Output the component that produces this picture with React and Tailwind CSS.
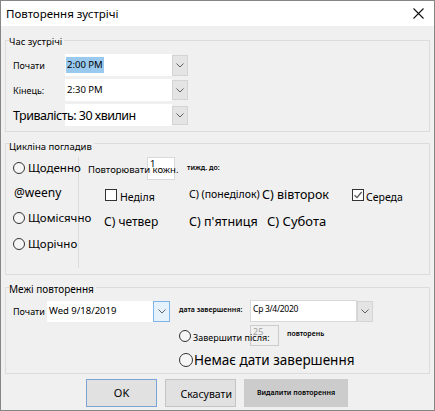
import React from "react";

const F = { fontFamily: '"Noto Sans", "Open Sans", sans-serif' };

function Radio({ size = 12 }) {
  return (
    <span
      className="inline-block shrink-0 rounded-full border border-[#333333] bg-[#f6f6f6]"
      style={{ width: size, height: size }}
    />
  );
}

function Check({ checked }) {
  return (
    <span className="relative inline-block w-[12px] h-[12px] shrink-0 border border-[#333333] bg-white">
      {checked && (
        <svg className="absolute left-[0px] top-[0px]" width="10" height="10" viewBox="0 0 10 10">
          <path d="M1.5 5.2 L4 7.6 L8.6 2" fill="none" stroke="#555" strokeWidth="1.3" />
        </svg>
      )}
    </span>
  );
}

function DropBtn({ cls = "" }) {
  return (
    <div className={"flex items-center justify-center shrink-0 " + cls}>
      <svg width="8" height="5" viewBox="0 0 8 5">
        <path d="M0.5 0.5 L4 4 L7.5 0.5" fill="none" stroke="#606060" strokeWidth="1" />
      </svg>
    </div>
  );
}

export default function App() {
  return (
    <div
      className="w-[435px] h-[411px] bg-[#f0f0f0] border border-[#868686] flex flex-col overflow-hidden text-black"
      style={F}
    >
      {/* title bar */}
      <div className="h-[25px] bg-white flex items-center justify-between pl-[5px] pr-[10px] shrink-0">
        <span className="text-[11.5px] leading-[14px]">Повторення зустрічі</span>
        <svg width="11" height="11" viewBox="0 0 11 11">
          <path d="M0.5 0.5 L10.5 10.5 M10.5 0.5 L0.5 10.5" stroke="#111" strokeWidth="1.1" />
        </svg>
      </div>

      <div className="flex flex-col px-[4px]">
        {/* group 1 */}
        <div className="relative mt-[14px] h-[92px] border border-[#dcdcdc]">
          <span className="absolute left-[3px] top-[-6px] bg-[#f0f0f0] pr-[2px] text-[9.5px] leading-[14px]">
            Час зустрічі
          </span>
          <div className="flex flex-col pt-[13px] pl-[7px]">
            <div className="flex items-center h-[22px]">
              <span className="w-[52px] text-[9px] pt-[2px]">Почати</span>
              <div className="w-[107px] h-[22px] bg-white flex items-center pl-[1px]">
                <span className="bg-[#99c9ef] text-[9.5px] leading-[16px] px-[1px]">2:00 PM</span>
              </div>
              <DropBtn cls="w-[16px] h-[21px] bg-[#e4e4e4] border border-[#d4d4d4]" />
            </div>
            <div className="flex items-center h-[22px] mt-[3px]">
              <span className="w-[52px] text-[9px] pt-[2px]">Кінець:</span>
              <div className="w-[107px] h-[22px] bg-white flex items-center pl-[2px]">
                <span className="text-[9.5px]">2:30 PM</span>
              </div>
              <DropBtn cls="w-[16px] h-[20px] bg-[#e4e4e4] border border-[#d4d4d4]" />
            </div>
            <div className="flex items-center h-[22px] mt-[3px]">
              <span className="relative z-10 w-[52px] whitespace-nowrap text-[12.5px] tracking-[-0.5px] leading-[18px] pt-[2px]">
                Тривалість: 30 хвилин
              </span>
              <div className="w-[107px] h-[22px] bg-white" />
              <DropBtn cls="w-[16px] h-[19px] bg-[#e4e4e4] border border-[#d4d4d4]" />
            </div>
          </div>
        </div>

        {/* group 2 */}
        <div className="relative mt-[11px] h-[132px] border border-[#dcdcdc]">
          <span className="absolute left-[3px] top-[-4px] bg-[#f0f0f0] pr-[2px] text-[9.5px] leading-[14px]">
            Цикліна погладив
          </span>
          <div className="flex pt-[13px]">
            <div className="w-[73px] h-[111px] border-r border-[#dcdcdc] pl-[7px] flex flex-col shrink-0">
              <div className="flex items-center h-[22px] gap-[3px] whitespace-nowrap">
                <Radio />
                <span className="text-[11.5px]">Щоденно</span>
              </div>
              <div className="flex items-center h-[22px] mt-[3px] pl-[1px] whitespace-nowrap">
                <span className="text-[12px]">@weeny</span>
              </div>
              <div className="flex items-center h-[22px] mt-[3px] gap-[3px] whitespace-nowrap">
                <Radio />
                <span className="text-[11.5px]">Щомісячно</span>
              </div>
              <div className="flex items-center h-[22px] mt-[4px] gap-[3px] whitespace-nowrap">
                <Radio />
                <span className="text-[11.5px]">Щорічно</span>
              </div>
            </div>

            <div className="flex flex-col">
              <div className="flex items-center h-[23px] pl-[9px]">
                <span className="relative z-10 w-[59px] whitespace-nowrap text-[9.5px] pt-[3px]">
                  Повторювати кожн.
                </span>
                <div className="w-[28px] h-[23px] bg-white border border-[#dadada] text-[9.5px] leading-[12px] pl-[2px]">
                  1
                </div>
                <span className="ml-[12px] text-[7px] font-semibold">тижд. до:</span>
              </div>

              <div className="flex items-center h-[20px] mt-[5px] pl-[26px] whitespace-nowrap">
                <div className="w-[84px] flex items-center gap-[3px]">
                  <Check />
                  <span className="text-[10.5px] pt-[6px]">Неділя</span>
                </div>
                <span className="w-[73px] text-[10.5px] pb-[1px]">С) (понеділок)</span>
                <span className="w-[90px] text-[12.5px] pt-[1px]">С) вівторок</span>
                <div className="flex items-center gap-[2px]">
                  <Check checked />
                  <span className="text-[10.5px] pt-[6px]">Середа</span>
                </div>
              </div>

              <div className="flex items-center h-[20px] mt-[7px] pl-[25px] whitespace-nowrap">
                <span className="w-[85px] text-[12px]">С) четвер</span>
                <span className="w-[78px] text-[12.5px]">С) п'ятниця</span>
                <span className="text-[13px]">С) Субота</span>
              </div>
            </div>
          </div>
        </div>

        {/* group 3 */}
        <div className="relative mt-[12px] h-[87px] border border-[#dcdcdc]">
          <span className="absolute left-[3px] top-[-6px] bg-[#f0f0f0] pr-[2px] text-[10px] leading-[14px]">
            Межі повторення
          </span>
          <div className="flex items-start">
            <div className="flex items-center mt-[13px] pl-[7px]">
              <span className="w-[34px] text-[9px]">Почати</span>
              <div className="w-[106px] h-[21px] bg-white flex items-center pl-[2px]">
                <span className="text-[9.5px] pb-[1px]">Wed 9/18/2019</span>
              </div>
              <DropBtn cls="w-[17px] h-[21px] bg-[#e5f1fb] border border-[#7eb4ea]" />
            </div>

            <div className="flex flex-col ml-[9px] mt-[12px]">
              <div className="flex items-center h-[22px]">
                <span className="w-[71px] text-[7px] font-semibold whitespace-nowrap pb-[2px]">дата завершення:</span>
                <div className="w-[107px] h-[22px] bg-white border border-[#d9d9d9] flex items-center pl-[2px]">
                  <span className="text-[8.5px] tracking-[-0.3px] pb-[3px]">Ср 3/4/2020</span>
                </div>
                <DropBtn cls="w-[16px] h-[21px] bg-[#e4e4e4] border border-[#d4d4d4]" />
              </div>
              <div className="flex items-center h-[21px] mt-[3px]">
                <div className="relative z-10 w-[71px] flex items-center gap-[2px] whitespace-nowrap">
                  <Radio />
                  <span className="text-[9px] pt-[4px]">Завершити після:</span>
                </div>
                <div className="w-[29px] h-[21px] bg-[#f0f0f0] border border-[#cccccc] text-[9px] leading-[12px] text-[#a0a0a0] pl-[2px]">
                  25
                </div>
                <span className="ml-[8px] text-[7px] font-semibold pb-[2px]">повторень</span>
              </div>
              <div className="flex items-center h-[20px] mt-[4px] gap-[1px] whitespace-nowrap">
                <Radio size={14} />
                <span className="text-[13.5px]">Немає дати завершення</span>
              </div>
            </div>
          </div>
        </div>

        {/* buttons */}
        <div className="flex mt-[5px] pl-[81px] gap-[8px]">
          <div className="w-[71px] h-[28px] bg-[#e1e1e1] border border-[#7aa3d6] flex items-center justify-center text-[11px]">
            OK
          </div>
          <div className="w-[71px] h-[28px] bg-[#e1e1e1] border border-[#c4c4c4] flex items-center justify-end pr-[3px] text-[10.5px] pt-[3px]">
            Скасувати
          </div>
          <div className="w-[104px] h-[28px] bg-[#cccccc] flex items-center justify-center text-[7px] font-semibold">
            Видалити повторення
          </div>
        </div>
      </div>
    </div>
  );
}
